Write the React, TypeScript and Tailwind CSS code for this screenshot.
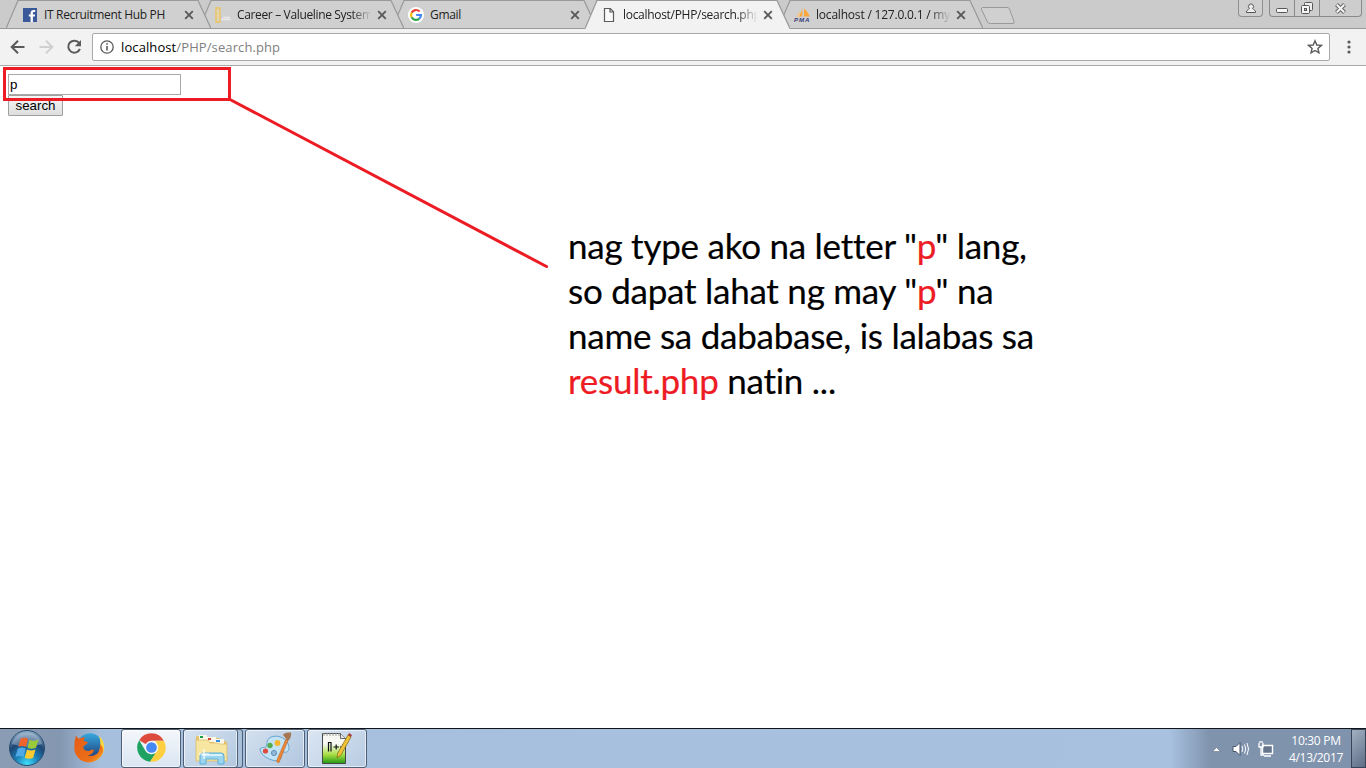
import React from "react";

const CloseX = () => (
  <svg viewBox="0 0 10 10" className="h-[10px] w-[10px] shrink-0">
    <path d="M1.2 1.2 8.8 8.8M8.8 1.2 1.2 8.8" stroke="#5a5a5a" strokeWidth="1.9" fill="none" />
  </svg>
);

const Facebook = () => (
  <svg viewBox="0 0 14 14" className="h-[14px] w-[14px]">
    <rect width="14" height="14" fill="#3b5998" />
    <path d="M7.6 14V8.6H5.8V6.5h1.8V5c0-2 1.200-3 3-3h1.600v2h-1.100c-.9 0-1.200.4-1.200 1.100v1.400h2.200l-.3 2.100H9.900V14z" fill="#fff" />
  </svg>
);

const Valueline = () => (
  <svg viewBox="0 0 16 16" className="h-4 w-4">
    <path d="M1 1h4v14H1z" fill="#d8d3c4" stroke="#eec25a" strokeWidth="1.300" />
    <path d="M3 4v8" stroke="#f3d78c" />
    <path d="M6 12.500h10M8 10.500h7" stroke="#e8e8e8" strokeWidth="1.500" />
  </svg>
);

const Google = () => (
  <svg viewBox="0 0 16 16" className="h-4 w-4">
    <circle cx="8" cy="8" r="8" fill="#fff" />
    <g fill="none" strokeWidth="2.200">
      <path d="M11.600 4.500A5 5 0 0 0 3.600 5.700" stroke="#ea4335" />
      <path d="M3.600 5.700A5 5 0 0 0 3.600 10.300" stroke="#fbbc05" />
      <path d="M3.600 10.300A5 5 0 0 0 11.300 11.700" stroke="#34a853" />
      <path d="M11.300 11.700A5 5 0 0 0 13 8H8.200" stroke="#4285f4" />
    </g>
  </svg>
);

const Page = () => (
  <svg viewBox="0 0 16 16" className="h-4 w-4">
    <path d="M3.500 1.500h5.800l3.200 3.200v9.800h-9zM9 1.500V5h3.500" fill="#fafafa" stroke="#5a5a5a" strokeWidth="1.200" />
  </svg>
);

const Pma = () => (
  <svg viewBox="0 0 16 16" className="h-4 w-4 overflow-visible">
    <path d="M8.300.5v9H4.200C6.300 7.500 7.700 4.500 8.300.5zM10 1.500c2.600 2 4.500 4.800 5.800 8H10z" fill="#f9a63a" />
    <path d="M1.800 9.800C3.800 8 5 6 5.900 4v5.500z" fill="#f7c684" />
    <text x="0" y="15" fontSize="6.200" fontWeight="bold" fontStyle="italic" fill="#3c3c78" fontFamily="Liberation Sans, sans-serif" textLength="15.500">PMA</text>
  </svg>
);

type TabProps = { title: string; icon: React.ReactNode; active?: boolean; fade?: boolean; z: string; spacing: string };

const Tab = ({ title, icon, active, fade, z, spacing }: TabProps) => (
  <div className={`relative -mr-3 h-[29px] w-[205px] shrink-0 ${z}`}>
    <svg viewBox="0 0 205 29" className="absolute inset-0 h-[29px] w-[205px]">
      <path
        d={active ? "M0 29 L12 .5 H192 L205 29Z" : "M0 28.500 L12 .5 H192 L205 28.500Z"}
        fill={active ? "#f2f2f2" : "#d0d0d0"}
      />
      <path d="M0 28.500 L12 .5 H192 L205 28.500" fill="none" stroke="#999" strokeWidth="1.200" />
      {!active && <path d="M0 28.500H205" stroke="#999" />}
    </svg>
    <div className="relative flex h-[29px] items-center pl-4">
      <span className="flex w-[22px] shrink-0 items-center pt-px">{icon}</span>
      <span className={`w-[136px] overflow-hidden whitespace-nowrap text-[12px] leading-[16px] text-[#222] ${spacing} ${fade ? "[mask-image:linear-gradient(to_right,black_84%,transparent_99%)]" : ""}`}>
        {title}
      </span>
      <span className="ml-[4px] pt-px"><CloseX /></span>
    </div>
  </div>
);

const WindowButtons = () => (
  <div className="ml-auto flex h-[17px] pr-[4px]">
    <div className="mr-[6px] flex h-[17px] w-[25px] items-center justify-center rounded-b-[4px] border border-t-0 border-[#8f8f8f] bg-[#cfcfcf]">
      <svg viewBox="0 0 12 12" className="h-3 w-3">
        <path d="M1.500 10.500V9l2-1.700L4.500 6.500a2.500 2.500 0 1 1 3 0l1 .8L10.500 9v1.500z" fill="#eee" stroke="#555" />
      </svg>
    </div>
    <div className="flex h-[17px] rounded-b-[4px] border border-t-0 border-[#8a8a8a] bg-[#cdcdcd]">
      <div className="flex w-[25px] items-end justify-center border-r border-[#8a8a8a] pb-[3px]">
        <svg viewBox="0 0 13 5" className="h-[5px] w-[13px]"><rect x=".5" y=".5" width="11" height="4" rx="1" fill="#f5f5f5" stroke="#555" /></svg>
      </div>
      <div className="flex w-[25px] items-center justify-center border-r border-[#8a8a8a]">
        <svg viewBox="0 0 14 14" className="h-[14px] w-[14px]">
          <rect x="4.500" y="1.500" width="8" height="8" rx="1" fill="#eee" stroke="#555" />
          <rect x="1.500" y="4.500" width="8" height="8" rx="1" fill="#f5f5f5" stroke="#555" />
          <rect x="4.500" y="7.500" width="2" height="2" fill="#ccc" stroke="#555" />
        </svg>
      </div>
      <div className="flex w-[41px] items-center justify-center">
        <svg viewBox="0 0 13 11" className="h-[11px] w-[13px]">
          <path d="M2.500 1.500 10.500 9.500M10.500 1.500 2.500 9.500" stroke="#666" strokeWidth="4" />
          <path d="M2.800 1.800 10.200 9.200M10.200 1.800 2.800 9.200" stroke="#f4f4f4" strokeWidth="2" />
        </svg>
      </div>
    </div>
  </div>
);

const Toolbar = () => (
  <div className="flex h-[37px] items-center border-b border-[#a9a9a9] bg-[#f2f2f2]">
    <svg viewBox="0 0 92 36" className="h-9 w-[92px] shrink-0" fill="none" strokeWidth="2">
      <path d="M24.500 18H12.500M18 11.700 11.700 18 18 24.300" stroke="#5a5a5a" />
      <path d="M39.500 18H51.500M46 11.700 52.300 18 46 24.300" stroke="#d0d0d0" />
      <path d="M79.200 14.200A6 6 0 1 0 79.900 19.800" stroke="#5a5a5a" />
      <path d="M81 11v6.200h-6.200z" fill="#5a5a5a" />
    </svg>
    <div className="flex h-[28px] w-[1238px] items-center rounded-[2px] border border-[#a9a9a9] bg-white">
      <svg viewBox="0 0 14 14" className="ml-[7px] h-[14px] w-[14px]" fill="none" stroke="#5a5a5a">
        <circle cx="7" cy="7" r="6.200" strokeWidth="1.300" />
        <path d="M7 6v4.500M7 3.300v1.500" strokeWidth="1.600" />
      </svg>
      <span className="ml-[7px] text-[13px] leading-[20px] tracking-[0.1px] text-[#808080]"><span className="text-black">localhost</span>/PHP/search.php</span>
      <svg viewBox="0 0 16 16" className="ml-auto mr-[6px] h-4 w-4">
        <path d="M8 1.800 9.800 6l4.600.4-3.500 3 1.050 4.500L8 11.500l-3.950 2.400L5.100 9.400l-3.500-3L6.200 6z" fill="none" stroke="#5a5a5a" strokeWidth="1.400" />
      </svg>
    </div>
    <svg viewBox="0 0 4 14" className="ml-[17px] h-[14px] w-[4px]" fill="#5a5a5a">
      <circle cx="2" cy="2" r="1.600" /><circle cx="2" cy="7" r="1.600" /><circle cx="2" cy="12" r="1.600" />
    </svg>
  </div>
);

const StartOrb = () => (
  <svg viewBox="0 0 38 38" className="h-[38px] w-[38px]">
    <defs>
      <radialGradient id="orb" cx=".5" cy=".95" r=".95">
        <stop offset="0" stopColor="#3fe0fb" /><stop offset=".35" stopColor="#1c7fb8" /><stop offset=".65" stopColor="#1d4674" /><stop offset="1" stopColor="#93b2cc" />
      </radialGradient>
    </defs>
    <circle cx="19" cy="19" r="17.500" fill="url(#orb)" stroke="#294d70" />
    <path d="M4 15A15.500 15.500 0 0 1 34 15Q19 20 4 15Z" fill="#fff" opacity=".28" />
    <path d="M12.500 10q4-2.500 7.500-.3L18 18q-3.500-2-7.600-.2z" fill="#f0632a" />
    <path d="M21.500 10.700q4 2 9-.3L28 18.700q-4.500 2-8.500.1z" fill="#9aca3c" />
    <path d="M9.800 19.500q4-1.900 7.800.1L15.500 28q-4-2-8-.1z" fill="#4fa9e6" />
    <path d="M19 20.400q4 2 8.500.1L25.200 28.700q-4 2.200-8.500 0z" fill="#fccb2f" />
  </svg>
);

const Firefox = () => (
  <svg viewBox="0 0 32 32" className="h-8 w-8">
    <defs>
      <linearGradient id="fox" x1="0" y1="0" x2="1" y2="1"><stop offset="0" stopColor="#e55b16" /><stop offset=".7" stopColor="#ec6f17" /><stop offset="1" stopColor="#fbb52d" /></linearGradient>
      <linearGradient id="globe" x1="0" y1="0" x2="0" y2="1"><stop offset="0" stopColor="#36a9e0" /><stop offset="1" stopColor="#213d7a" /></linearGradient>
    </defs>
    <circle cx="17" cy="13.500" r="12.300" fill="url(#globe)" />
    <path d="M26 4q6 5 5 14-2 9-13 12 8-6 9-14 1-7-1-12z" fill="#fbd73d" />
    <path d="M3 3.500Q4 6 6.500 6.500Q9 5 12 5.500L10.500 9q3 .2 4.500 1.500-2 2.500-4.500 3.500-.5 3 2 4.500 3 1.200 5.500-.5 2-1 3 .5-2 4.500-6.500 5 6 1.500 10-2 3-4 2.500-9.500Q31 16 30 20A14.700 14.700 0 0 1 1.300 17Q1 9 3 3.500Z" fill="url(#fox)" />
  </svg>
);

const Chrome = () => (
  <svg viewBox="0 0 32 32" className="h-[31px] w-[31px]">
    <path d="M16 16 3.300 8.500A14.700 14.700 0 0 1 28.800 9H16z" fill="#dd4b3e" />
    <path d="M3.300 8.500A14.700 14.700 0 0 0 14.500 30.700L22 19.500 16 23 9.800 19.500z" fill="#1da261" />
    <path d="M28.800 9A14.700 14.700 0 0 1 14.500 30.700L22.500 18 20 9z" fill="#fdcf41" />
    <circle cx="16" cy="16" r="7" fill="#f6f6f6" />
    <circle cx="16" cy="16" r="5.500" fill="#4688f4" />
  </svg>
);

const Explorer = () => (
  <svg viewBox="0 0 34 32" className="h-8 w-[34px]">
    <path d="M2 4q0-1 1-1h9l2 2h11l2 3h4q2 0 2 2v16H2z" fill="#e6c46c" />
    <path d="M5 2h8v5H5zM13 4h9v5h-9zM20 6h10v5H20z" fill="#fbf8ea" />
    <path d="M6 3h3v2H6z" fill="#17a04a" /><path d="M14 5h3v2h-3z" fill="#d1452c" /><path d="M22 7h4v2h-4z" fill="#3493dc" />
    <path d="M2 7h12l2 3h8l2 1h7v17H2z" fill="#f7e6a0" stroke="#d9b65b" strokeWidth=".7" />
    <path d="M6 31v-8q0-3 3-3h18q3 0 3 3v8h-6v-5H12v5z" fill="#9bd5f0" stroke="#5bafd8" />
    <path d="M8 22h20" stroke="#d5f1fc" strokeWidth="2" />
    <path d="M10 16v10M5 21h10" stroke="#fff" strokeWidth="1.200" />
  </svg>
);

const Paint = () => (
  <svg viewBox="0 0 34 32" className="h-8 w-[34px]">
    <path d="M13 6C21 3 30 8 31 16c0 4-2 6-5 5-3-.5-4 1-3 4 .5 4-3 6-9 4C7 27 2 22 2 18c1-2 4-1 6-2 2-2-1-7 5-10z" fill="#c2e3f5" stroke="#69a6cd" />
    <circle cx="7.500" cy="20" r="2.600" fill="#df4b3d" /><circle cx="12" cy="14.500" r="2.700" fill="#55ad4e" /><circle cx="19.500" cy="12" r="2.900" fill="#f5b62c" />
    <circle cx="16" cy="22" r="2.600" fill="#91b9d8" stroke="#6093b9" />
    <path d="m28 8 2 1.500-9 22q-2 0-2.500-1.500z" fill="#ed8738" stroke="#ba632a" strokeWidth=".6" />
    <path d="M25 4q1-3 8-2.500Q34 6 30 10z" fill="#a77753" />
  </svg>
);

const NotepadPP = () => (
  <svg viewBox="0 0 32 34" className="h-[34px] w-8">
    <defs><linearGradient id="npp" x1="0" y1="0" x2="0" y2="1"><stop offset=".35" stopColor="#f6f8f1" /><stop offset=".7" stopColor="#a9df45" /><stop offset="1" stopColor="#209712" /></linearGradient></defs>
    <path d="M1.500 2.500h18l5 5v25h-23z" fill="url(#npp)" stroke="#474747" />
    <path d="M19.500 2.500v5h5" fill="#e6e6e6" stroke="#666" />
    <path d="M3 2v3M6 2v3M9 2v3M12 2v3M15 2v3M18 2v3" stroke="#999" />
    <path d="M7.500 20.500v-9h2.500v9M12.500 16h5.500M15.200 13.500v5M19 16h5.500M21.700 13.500v5" fill="none" stroke="#111" strokeWidth="1.200" />
    <path d="m27 4 3 2-10 18-4 3 .8-5z" fill="#f1c338" stroke="#7d641e" strokeWidth=".7" />
    <path d="m27 4 1-2 3 2-1 2z" fill="#a33b38" />
  </svg>
);

const taskButton = "flex h-[39px] items-center justify-center rounded-[3px] border border-[#4e5f75] shadow-[inset_0_0_0_1px_rgba(255,255,255,0.6)]";

const Taskbar = () => (
  <div className="flex h-10 border-t border-[#10151c] bg-[linear-gradient(to_right,#8b9db5_0px,#8497b0_60px,#a5bfdd_100px,#a7c1df_1170px,#8093ad_1210px,#8093ad_1366px)]">
    <div className="flex w-[54px] items-center justify-center pb-px"><StartOrb /></div>
    <div className="flex w-[67px] items-center justify-center pb-[2px] pl-[2px]"><Firefox /></div>
    <div className={`${taskButton} w-[60px] bg-[linear-gradient(#f4f7fb,#d9e5f2)] pb-[2px]`}><Chrome /></div>
    <div className="ml-[2px] flex h-[39px] w-[60px] rounded-[3px] border-y border-r border-[#4e5f75] bg-[#a9c0da]">
      <div className={`${taskButton} -mt-px w-[55px] bg-[linear-gradient(135deg,#d6e2f0,#b2c8e0)]`}><Explorer /></div>
    </div>
    <div className={`${taskButton} ml-[2px] w-[60px] bg-[linear-gradient(135deg,#d3e0ef,#b0c6df)] pb-[3px]`}><Paint /></div>
    <div className={`${taskButton} ml-[2px] w-[60px] bg-[linear-gradient(135deg,#dbe6f2,#b7cbe2)] pb-[2px]`}><NotepadPP /></div>
    <div className="ml-auto flex items-center">
      <svg viewBox="0 0 64 20" className="h-5 w-16">
        <path d="M2.500 12.500 6.500 8.500 10.500 12.500Z" fill="#fff" stroke="#526074" strokeWidth=".5" />
        <path d="M23 7.500h3l4-4v13l-4-4h-3z" fill="#fff" stroke="#46556a" />
        <path d="M32 7q1.500 3 0 6M34.500 5.500q2.500 4.500 0 9M37 4q3 6 0 12" fill="none" stroke="#fff" strokeWidth="1" />
        <path d="M52.500 6.500h10v8h-10z" fill="#65758c" stroke="#fff" strokeWidth="1.400" />
        <path d="M54 17h7M49 4v4h4V4M50 2v2M52 2v2M51 8v8h3" fill="none" stroke="#fff" strokeWidth="1.300" />
      </svg>
      <div className="ml-[4px] w-[76px] text-center text-[12px] leading-[17px] tracking-[-0.3px] text-white">
        <div>10:30 PM</div><div>4/13/2017</div>
      </div>
      <div className="-ml-[3px] h-[39px] w-[15px] border border-[#384558] bg-[linear-gradient(135deg,#a2b0c2,#5e6e86)]" />
    </div>
  </div>
);

const Red = ({ children }: { children: React.ReactNode }) => <span className="text-[#ed1c24]">{children}</span>;

export default function App() {
  return (
    <div className="relative flex h-[768px] w-[1366px] flex-col overflow-hidden bg-white font-['Open_Sans','Noto_Sans',sans-serif]">
      <header>
        <div className="relative flex h-[29px] bg-[#cbcbcb] pl-[6px] shadow-[inset_0_-1px_0_#999]">
          <Tab title="IT Recruitment Hub PH" icon={<span className="pl-px"><Facebook /></span>} z="z-[5]" spacing="tracking-[-0.33px]" />
          <Tab title="Career – Valueline Systems" icon={<Valueline />} fade z="z-[4]" spacing="tracking-[-0.35px]" />
          <Tab title="Gmail" icon={<Google />} z="z-[3]" spacing="tracking-[-0.3px]" />
          <Tab title="localhost/PHP/search.php" icon={<Page />} active fade z="z-[6]" spacing="tracking-[-0.3px]" />
          <Tab title="localhost / 127.0.0.1 / mysql" icon={<Pma />} fade z="z-[2]" spacing="tracking-[-0.2px]" />
          <svg viewBox="0 0 36 18" className="ml-[9px] mt-[6px] h-[18px] w-9">
            <path d="M2.500 1.500H27Q29 1.500 29.500 3L34 15.500Q34.500 17.500 33 17.500H10.500Q8 17.500 7.500 16L1.500 3.500Q1 1.500 2.500 1.500Z" fill="#d0d0d0" stroke="#999" />
          </svg>
          <WindowButtons />
        </div>
        <Toolbar />
      </header>
      <main className="relative flex-1">
        <div className="flex flex-col items-start pl-2 pt-2 font-['Liberation_Sans',Arial,sans-serif] text-[13.333px]">
          <input defaultValue="p" className="h-[21px] w-[173px] border border-[#a9a9a9] bg-white px-px text-black outline-none" />
          <button className="h-[21px] w-[55px] rounded-[1px] border border-[#a0a0a0] bg-[linear-gradient(#f6f6f6,#dedede)] text-black">search</button>
        </div>
        <svg viewBox="0 0 560 210" className="absolute left-0 top-0 h-[210px] w-[560px]" fill="none" stroke="#ed1c24" strokeWidth="3">
          <path d="M4.500 2.500H229.500V33.500H4.500Z" />
          <path d="M230 33.500 546.500 200.500" strokeLinecap="round" />
        </svg>
        <div className="pl-[568px] pt-[107px] font-['Lato','Open_Sans',sans-serif] text-[35px] leading-[45px] tracking-[-0.25px] text-black whitespace-nowrap [-webkit-text-stroke:0.2px]">
          <div>nag type ako na letter "<Red>p</Red>" lang,</div>
          <div>so dapat lahat ng may "<Red>p</Red>" na</div>
          <div>name sa dababase, is lalabas sa</div>
          <div><Red>result.php</Red> natin ...</div>
        </div>
      </main>
      <Taskbar />
    </div>
  );
}
